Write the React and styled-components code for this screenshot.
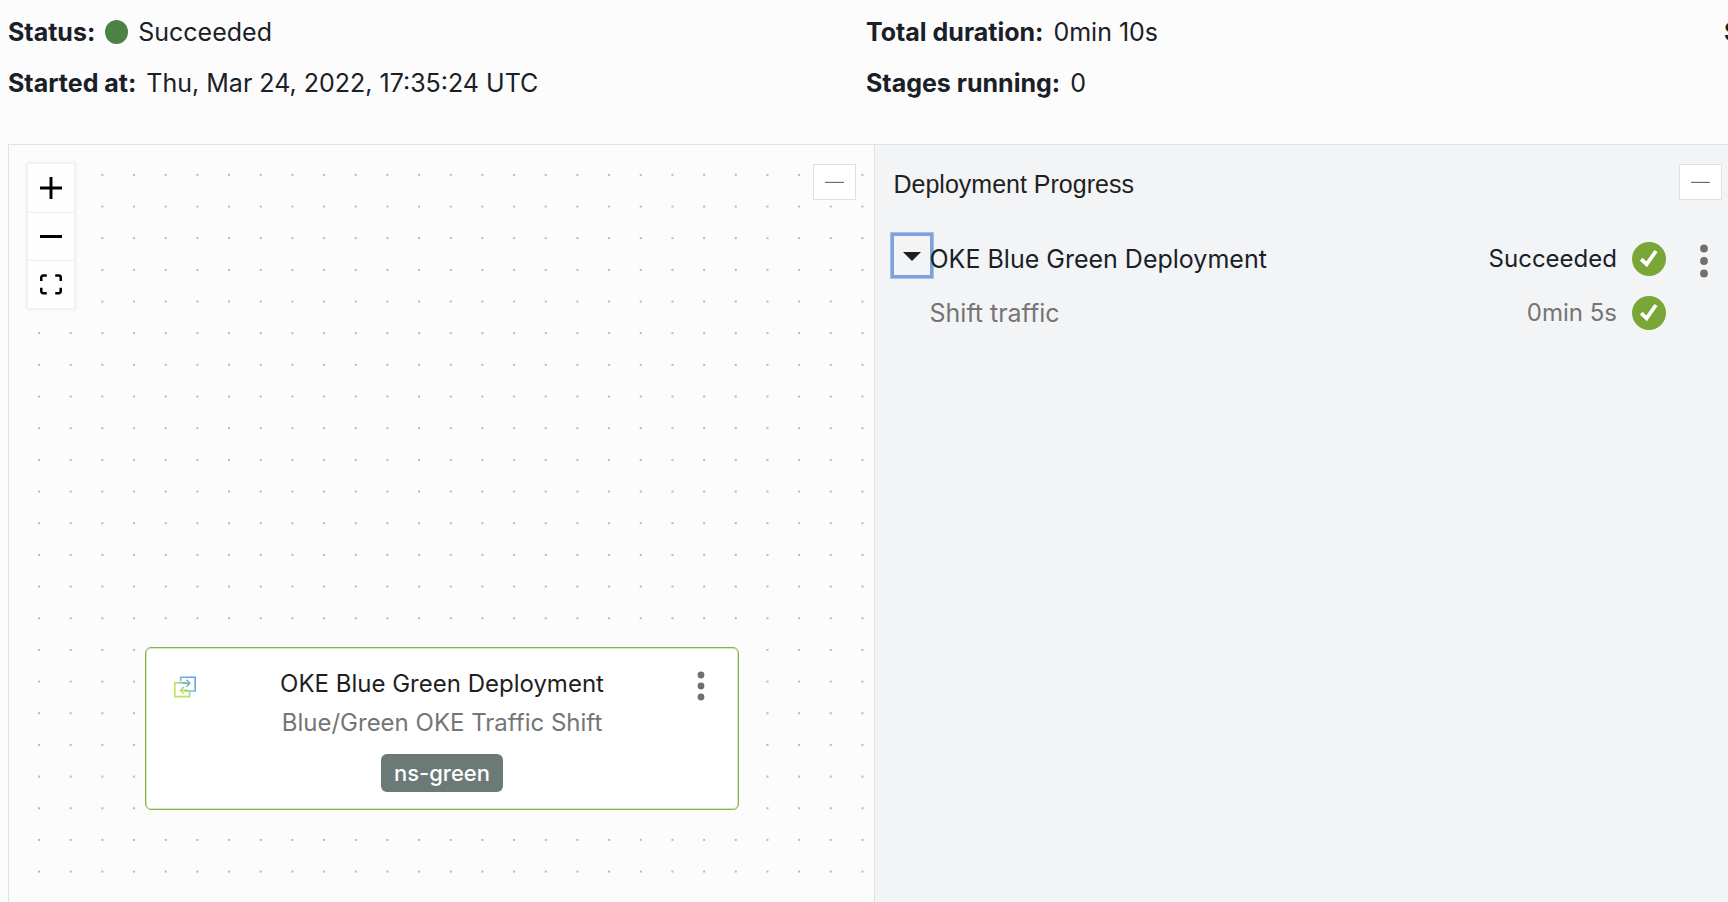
import React, { useState } from "react";
import styled, { createGlobalStyle } from "styled-components";

const GlobalStyle = createGlobalStyle`
  * { box-sizing: border-box; }
  body {
    margin: 0;
    background: #fcfcfc;
    color: #1a2027;
    font-family: Inter, "Liberation Sans", sans-serif;
    font-size: 24px;
    line-height: 32px;
    overflow: hidden;
  }
  button { font: inherit; color: inherit; padding: 0; cursor: pointer; }
`;

const Page = styled.div`
  display: flex;
  flex-direction: column;
  min-height: 100vh;
  padding-left: 8px;
  overflow: hidden;
`;

const Summary = styled.dl`
  display: grid;
  grid-template-columns: repeat(3, calc(50% - 2px));
  row-gap: 19px;
  margin: 0;
  padding: 16px 0 45px;
  font-size: 25px;
`;

const Fact = styled.div`
  display: flex;
  align-items: center;
  gap: 10px;
  white-space: nowrap;
`;

const FactLabel = styled.dt`
  font-weight: 700;
`;

const FactValue = styled.dd`
  display: flex;
  align-items: center;
  gap: 10px;
  margin: 0;
`;

const StatusDot = styled.span`
  width: 23px;
  height: 24px;
  border-radius: 50%;
  background: #4c8246;
`;

const Workspace = styled.main`
  flex: 1;
  display: grid;
  grid-template-columns: calc(50% + 6px) 1fr;
  border-top: 1px solid #e0e1e5;
  border-left: 1px solid #e0e1e5;
`;

const Canvas = styled.section`
  position: relative;
  display: flex;
  justify-content: space-between;
  align-items: flex-start;
  padding: 19px 18px 19px 19px;
  border-right: 1px solid #e0e1e5;
`;

const DotGrid = styled.svg`
  position: absolute;
  inset: 0;
  width: 100%;
  height: 100%;
`;

const Controls = styled.div`
  position: relative;
  display: flex;
  flex-direction: column;
  width: 46px;
  background: #fefefe;
  box-shadow: 0 0 3px 2px rgba(0, 0, 0, 0.06);
`;

const ControlButton = styled.button`
  display: grid;
  place-items: center;
  height: 48px;
  border: 0;
  background: #fefefe;
  & + & {
    border-top: 1px solid #eee;
  }
`;

const CollapseButton = styled.button`
  position: relative;
  display: grid;
  place-items: center;
  width: 43px;
  height: 36px;
  border: 1px solid #dfe0e2;
  background: #fff;
`;

const Node = styled.article`
  position: absolute;
  left: 136px;
  top: 502px;
  display: grid;
  grid-template-columns: 22px 1fr 24px;
  align-items: start;
  width: 594px;
  padding: 20px 26px 17px 28px;
  border: 1px solid #86b546;
  border-radius: 6px;
  background: #fff;
  box-shadow: inset 0 0 0 1px #d6e6c2;
  color: #1f1f1f;
`;

const NodeBody = styled.div`
  display: flex;
  flex-direction: column;
  align-items: center;
`;

const NodeTitle = styled.h3`
  margin: 0;
  font-size: 24px;
  font-weight: 400;
`;

const NodeType = styled.p`
  margin: 7px 0 15px;
  color: #757575;
`;

const Tag = styled.span`
  padding: 3px 13px;
  border-radius: 6px;
  background: #6b7977;
  color: #fff;
  font-size: 22px;
  font-weight: 500;
`;

const NodeIcon = styled.svg`
  margin-top: 8px;
`;

const MenuButton = styled.button`
  display: grid;
  place-items: center;
  justify-self: end;
  width: 22px;
  height: 36px;
  border: 0;
  background: none;
`;

const Progress = styled.section`
  padding: 19px 6px 19px 15px;
  background: #f3f4f6;
`;

const ProgressHeader = styled.header`
  display: flex;
  justify-content: space-between;
  align-items: flex-start;
  padding-left: 4px;
`;

const ProgressTitle = styled.h2`
  margin: 4px 0 0;
  color: #1f1f1f;
  font-family: "Liberation Sans", Arial, sans-serif;
  font-size: 25px;
  font-weight: 400;
`;

const StageList = styled.ul`
  margin: 32px 0 0;
  padding: 0;
  list-style: none;
`;

const Stage = styled.li`
  display: grid;
  grid-template-columns: 40px 1fr auto 34px 56px;
  align-items: center;
  height: 54px;
  color: ${(p) => (p.$sub ? "#757575" : "inherit")};
  svg { display: block; }
`;

const StageName = styled.span`
  grid-column: 2;
  position: relative;
  font-size: 25px;
`;

const StageResult = styled.span`
  padding-right: 15px;
`;

const Expander = styled.button`
  display: grid;
  place-items: center;
  align-self: start;
  width: 44px;
  height: 47px;
  border: 1px solid #a3c0e9;
  box-shadow: inset 0 0 0 3px #7ba2dc;
  background: none;
  color: #1f1f1f;
`;

const StageMenu = styled(MenuButton)`
  margin: 4px 7px 0 0;
`;

const Kebab = ({ radius, pitch }) => (
  <svg width="10" height="36" viewBox="-5 -18 10 36" fill="#707070" aria-hidden="true">
    <circle cy={-pitch} r={radius} />
    <circle r={radius} />
    <circle cy={pitch} r={radius} />
  </svg>
);

const Check = () => (
  <svg width="34" height="34" viewBox="0 0 34 34" role="img" aria-label="Succeeded">
    <circle cx="17" cy="17" r="17" fill="#7aa637" />
    <path d="M9.2 17.2l5.4 5.2L24 9" fill="none" stroke="#fff" strokeWidth="3.8" />
  </svg>
);

const Collapse = ({ label }) => (
  <CollapseButton aria-label={label}>
    <svg width="19" height="2" viewBox="0 0 19 2" aria-hidden="true">
      <path d="M0 1.5h19" stroke="#6e6e6e" />
      <path d="M0 .5h19" stroke="#e4e4e4" />
    </svg>
  </CollapseButton>
);

const Dots = () => (
  <DotGrid aria-hidden="true">
    <pattern id="dots" width="20" height="20" patternUnits="userSpaceOnUse" patternTransform="translate(14.2 14) scale(1.5835)">
      <circle cx="10" cy="10" r=".62" fill="#a0a0a0" />
    </pattern>
    <rect width="100%" height="100%" fill="url(#dots)" />
  </DotGrid>
);

export default function App() {
  const [open, setOpen] = useState(true);
  return (
    <Page>
      <GlobalStyle />
      <Summary>
        <Fact>
          <FactLabel>Status:</FactLabel>
          <FactValue><StatusDot />Succeeded</FactValue>
        </Fact>
        <Fact>
          <FactLabel>Total duration:</FactLabel>
          <FactValue>0min 10s</FactValue>
        </Fact>
        <Fact>
          <FactLabel>S</FactLabel>
        </Fact>
        <Fact>
          <FactLabel>Started at:</FactLabel>
          <FactValue>Thu, Mar 24, 2022, 17:35:24 UTC</FactValue>
        </Fact>
        <Fact>
          <FactLabel>Stages running:</FactLabel>
          <FactValue>0</FactValue>
        </Fact>
      </Summary>
      <Workspace>
        <Canvas>
          <Dots />
          <Controls>
            <ControlButton aria-label="Zoom in">
              <svg width="22" height="22" viewBox="0 0 32 32" aria-hidden="true">
                <path d="M32 18.133H18.133V32h-4.266V18.133H0v-4.266h13.867V0h4.266v13.867H32z" />
              </svg>
            </ControlButton>
            <ControlButton aria-label="Zoom out">
              <svg width="22" height="3" viewBox="0 0 22 3" aria-hidden="true">
                <path d="M0 0h22v3H0z" />
              </svg>
            </ControlButton>
            <ControlButton aria-label="Fit view">
              <svg width="22" height="21" viewBox="0 0 32 30" aria-hidden="true">
                <path d="M3.692 4.63c0-.53.4-.938.939-.938h5.215V0H4.708C2.13 0 0 2.054 0 4.63v5.216h3.692V4.631zM27.354 0h-5.2v3.692h5.17c.53 0 .984.4.984.939v5.215H32V4.631A4.624 4.624 0 0027.354 0zm.954 24.83c0 .532-.4.94-.939.94h-5.215v3.768h5.215c2.577 0 4.631-2.13 4.631-4.707v-5.139h-3.692v5.139zm-23.677.94c-.531 0-.939-.4-.939-.94v-5.138H0v5.139c0 2.577 2.13 4.707 4.708 4.707h5.138V25.77H4.631z" />
              </svg>
            </ControlButton>
          </Controls>
          <Collapse label="Collapse canvas" />
          <Node>
            <NodeIcon width="22" height="22" viewBox="0 0 22 22" fill="none" strokeWidth="1.6" aria-hidden="true">
              <defs>
                <linearGradient id="shift" x1="0" y1="22" x2="22" y2="0" gradientUnits="userSpaceOnUse">
                  <stop offset=".35" stopColor="#b9e75c" />
                  <stop offset=".6" stopColor="#74b8c4" />
                  <stop offset=".8" stopColor="#6a9ff0" />
                </linearGradient>
              </defs>
              <g stroke="url(#shift)">
                <path d="M6.7 5.5V1.2H21.2V15H10M15.6 16V20.6H.8V6.8H12" />
                <path d="M8 7.2h7.6M12.4 3.8l3.4 3.4-3.4 3.4M14 14.4H6.6M9.8 11l-3.4 3.4 3.4 3.4" />
              </g>
            </NodeIcon>
            <NodeBody>
              <NodeTitle>OKE Blue Green Deployment</NodeTitle>
              <NodeType>Blue/Green OKE Traffic Shift</NodeType>
              <Tag>ns-green</Tag>
            </NodeBody>
            <MenuButton aria-label="Stage actions"><Kebab radius={3.4} pitch={11} /></MenuButton>
          </Node>
        </Canvas>
        <Progress>
          <ProgressHeader>
            <ProgressTitle>Deployment Progress</ProgressTitle>
            <Collapse label="Collapse progress" />
          </ProgressHeader>
          <StageList>
            <Stage>
              <Expander aria-label="Toggle stages" aria-expanded={open} onClick={() => setOpen(!open)}>
                <svg width="18" height="10" viewBox="0 0 18 10" aria-hidden="true">
                  <path d="M0 1h18L9 10z" fill="#1f1f1f" />
                </svg>
              </Expander>
              <StageName>OKE Blue Green Deployment</StageName>
              <StageResult>Succeeded</StageResult>
              <Check />
              <StageMenu aria-label="Deployment actions"><Kebab radius={3.9} pitch={12.5} /></StageMenu>
            </Stage>
            {open && (
              <Stage $sub>
                <StageName>Shift traffic</StageName>
                <StageResult>0min 5s</StageResult>
                <Check />
              </Stage>
            )}
          </StageList>
        </Progress>
      </Workspace>
    </Page>
  );
}
